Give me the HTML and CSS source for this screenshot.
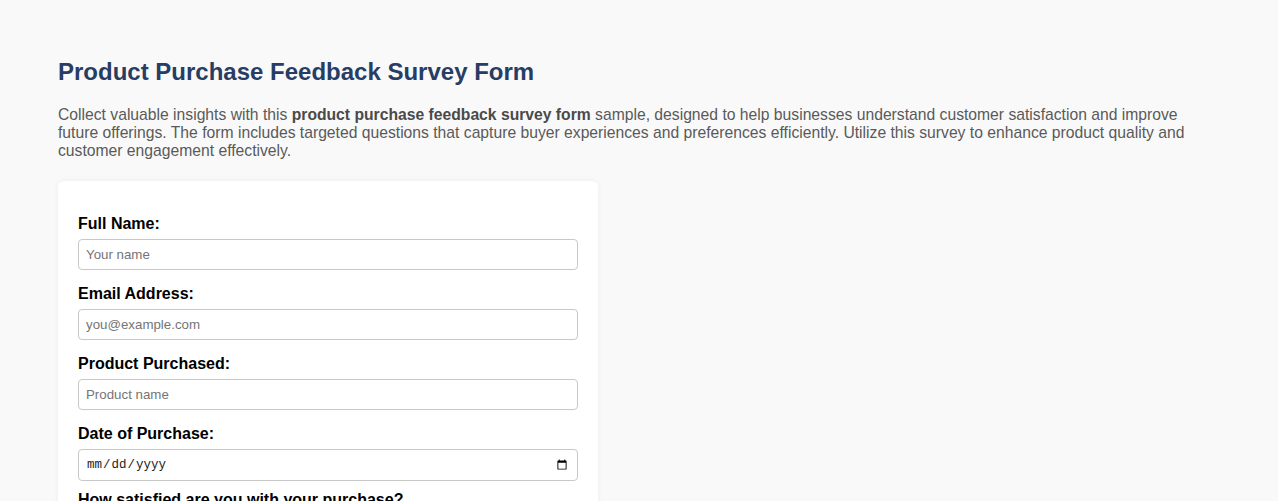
FILE: index.html
```html
<!DOCTYPE html>
<html lang="en">
<head>
<meta charset="utf-8">
<title>Product Purchase Feedback Survey Form</title>
<link rel="stylesheet" href="styles.css">
</head>
<body>
<div class="page">
  <h1 class="title">Product Purchase Feedback Survey Form</h1>
  <p class="intro">Collect valuable insights with this <strong>product purchase feedback survey form</strong> sample, designed to help businesses understand customer satisfaction and improve future offerings. The form includes targeted questions that capture buyer experiences and preferences efficiently. Utilize this survey to enhance product quality and customer engagement effectively.</p>
  <form class="card">
    <label class="field-label" for="name">Full Name:</label>
    <input class="field-input" id="name" type="text" placeholder="Your name">
    <label class="field-label" for="email">Email Address:</label>
    <input class="field-input" id="email" type="email" placeholder="you@example.com">
    <label class="field-label" for="product">Product Purchased:</label>
    <input class="field-input" id="product" type="text" placeholder="Product name">
    <label class="field-label" for="date">Date of Purchase:</label>
    <input class="field-input date-input" id="date" type="date">
    <label class="field-label last-label">How satisfied are you with your purchase?</label>
  </form>
</div>
</body>
</html>
```
FILE: styles.css
```css
html, body {
  margin: 0;
  padding: 0;
  background: #f9f9f9;
}
body {
  font-family: "Liberation Sans", Arial, sans-serif;
}
.page {
  padding: 58px 58px 40px;
}
.title {
  margin: 0;
  font-size: 24px;
  line-height: 28px;
  font-weight: bold;
  color: #283d63;
}
.intro {
  margin: 20px 0 0;
  font-size: 15.7px;
  line-height: 18px;
  color: #5a5a5a;
}
.intro strong {
  color: #4a4a4a;
}
.card {
  margin-top: 21px;
  width: 500px;
  padding: 19px 20px 20px;
  background: #ffffff;
  border-radius: 6px;
  box-shadow: 0 0 6px rgba(0, 0, 0, 0.05);
  display: flex;
  flex-direction: column;
}
.field-label {
  display: block;
  margin: 15px 0 6px;
  font-size: 16px;
  line-height: 18px;
  font-weight: bold;
  color: #000;
}
.last-label {
  margin-top: 10px;
}
.field-input {
  box-sizing: border-box;
  width: 500px;
  height: 31px;
  padding: 7px 7px;
  border: 1px solid #c8c8c8;
  border-radius: 4px;
  font-family: "Liberation Sans", Arial, sans-serif;
  font-size: 13.3px;
  color: #222;
  background: #fff;
}
.field-input::placeholder {
  color: #757575;
}
.date-input {
  height: 32px;
  font-family: "Liberation Mono", "DejaVu Sans Mono", monospace;
  font-size: 12.5px;
  color: #222;
}
```
